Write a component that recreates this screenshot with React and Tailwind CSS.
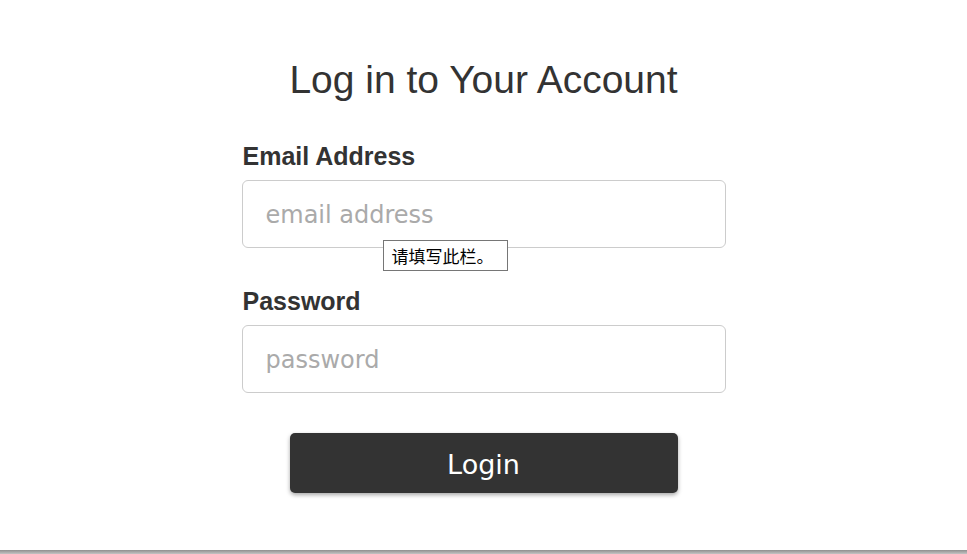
import React, { useState } from 'react'

const Field = ({ label, type, placeholder, value, onChange, children }) => (
  <div className="relative">
    <label className="block pl-px text-[25px] leading-[29px] font-bold text-[#333] mb-[9px]">
      {label}
    </label>
    <input
      type={type}
      value={value}
      onChange={onChange}
      placeholder={placeholder}
      required
      className="block w-full h-[68px] px-[23px] pt-[2px] border border-[#ccc] rounded-[6px] bg-white text-[24px] text-[#333] placeholder:text-[#aaa] outline-none"
      style={{ fontFamily: '"DejaVu Sans", Verdana, sans-serif' }}
    />
    {children}
  </div>
)

export default function App() {
  const [email, setEmail] = useState('')
  const [password, setPassword] = useState('')

  return (
    <div className="h-screen flex flex-col bg-white" style={{ fontFamily: '"Liberation Sans", Arial, sans-serif' }}>
      <main className="flex-1">
        <div className="w-[484px] mx-auto pt-[58px]">
          <h1 className="text-[39px] leading-[44px] text-center text-[#333] mb-[40px]">
            Log in to Your Account
          </h1>

          <form className="flex flex-col gap-[39px]" onSubmit={(e) => e.preventDefault()}>
            <Field
              label="Email Address"
              type="email"
              placeholder="email address"
              value={email}
              onChange={(e) => setEmail(e.target.value)}
            >
              {/* validation bubble */}
              <div
                className="absolute left-[141px] top-[98px] w-[125px] h-[31px] pl-[8px] flex items-center border border-[#767676] bg-white text-[17px] text-black whitespace-nowrap"
                style={{ fontFamily: '"Noto Sans CJK SC", sans-serif' }}
              >
                请填写此栏。
              </div>
            </Field>

            <Field
              label="Password"
              type="password"
              placeholder="password"
              value={password}
              onChange={(e) => setPassword(e.target.value)}
            />

            <div className="flex justify-center pt-px">
              <button
                type="submit"
                className="w-[388px] h-[60px] pt-[4px] rounded-[5px] bg-[#333] text-white text-[27px] shadow-[0_2px_4px_rgba(0,0,0,0.35)]"
                style={{ fontFamily: '"DejaVu Sans", Verdana, sans-serif' }}
              >
                Login
              </button>
            </div>
          </form>
        </div>
      </main>
      <div className="h-[4px] bg-gradient-to-b from-[#8f8f8f] to-[#c4c4c4]" />
    </div>
  )
}
